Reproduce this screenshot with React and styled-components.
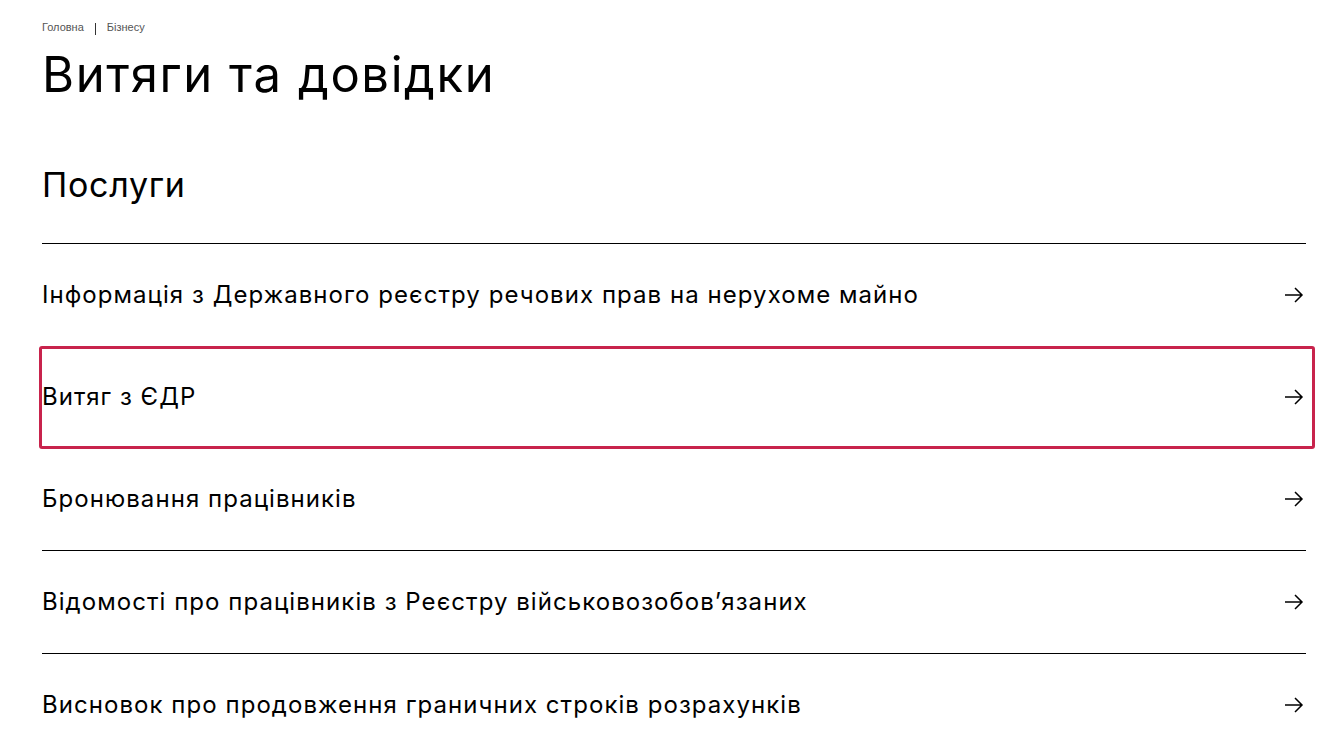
import React from "react";
import styled, { createGlobalStyle } from "styled-components";

const services = [
  { title: "Інформація з Державного реєстру речових прав на нерухоме майно" },
  { title: "Витяг з ЄДР", active: true },
  { title: "Бронювання працівників" },
  { title: "Відомості про працівників з Реєстру військовозобов’язаних" },
  { title: "Висновок про продовження граничних строків розрахунків" },
];

function ArrowIcon() {
  return (
    <svg width="20" height="18" viewBox="0 0 20 18" fill="none">
      <path d="M1 9h17M11 2l7 7-7 7" stroke="#000" strokeWidth="1.5" />
    </svg>
  );
}

export default function App() {
  return (
    <Page>
      <GlobalStyle />
      <Breadcrumbs>
        <Crumb>Головна</Crumb>
        <Divider />
        <Crumb>Бізнесу</Crumb>
      </Breadcrumbs>
      <Title>Витяги та довідки</Title>
      <SectionTitle>Послуги</SectionTitle>
      <List>
        {services.map((s) => (
          <Row key={s.title} $active={s.active}>
            <RowText>{s.title}</RowText>
            <ArrowIcon />
          </Row>
        ))}
      </List>
    </Page>
  );
}

const GlobalStyle = createGlobalStyle`
  body {
    margin: 0;
    background: #fff;
    color: #000;
    font-family: Inter, "Noto Sans", sans-serif;
  }
`;

const Page = styled.div`
  padding: 20px 37px 0 42px;
`;

const Breadcrumbs = styled.div`
  display: flex;
  align-items: center;
  gap: 11px;
  height: 14px;
`;

const Crumb = styled.span`
  font-family: "Liberation Sans", Arial, sans-serif;
  font-size: 11px;
  color: #555;
`;

const Divider = styled.span`
  width: 1px;
  height: 12px;
  margin-top: 3px;
  background: #333;
`;

const Title = styled.h1`
  margin: 12px 0 0;
  font-size: 49px;
  font-weight: 400;
  line-height: 58px;
  letter-spacing: 1.6px;
`;

const SectionTitle = styled.h2`
  margin: 60px 0 0;
  font-size: 34px;
  font-weight: 400;
  line-height: 42px;
  letter-spacing: 0.7px;
`;

const List = styled.div`
  margin-top: 37px;
  border-top: 1px solid #000;
`;

const Row = styled.div`
  display: flex;
  align-items: center;
  justify-content: space-between;
  box-sizing: border-box;
  height: 102.67px;
  padding-right: 2px;
  border-bottom: 1px solid #000;
  ${(p) =>
    p.$active &&
    `
    position: relative;
    height: 103px;
    margin: -1px -9px 0 -3px;
    border: 3px solid #c8234c;
    border-radius: 3px;
    padding: 0 8px 0 0;
  `}
`;

const RowText = styled.span`
  font-size: 24px;
  font-weight: 400;
  line-height: 30px;
  letter-spacing: 1.05px;
`;
